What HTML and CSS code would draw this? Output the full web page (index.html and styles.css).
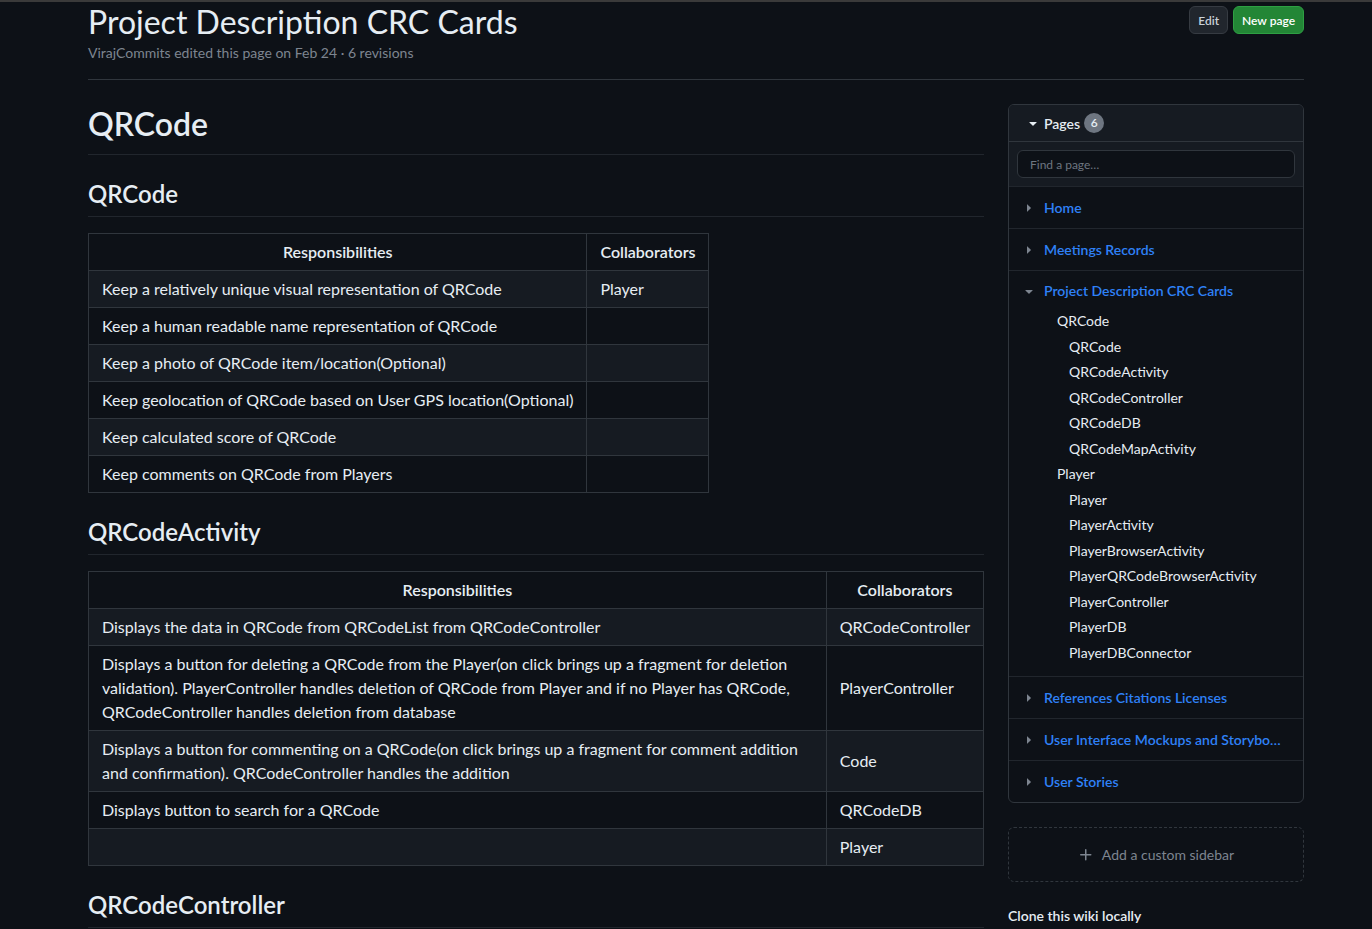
FILE: index.html
```html
<!DOCTYPE html>
<html lang="en">
<head>
<meta charset="utf-8">
<title>Project Description CRC Cards</title>
<link rel="stylesheet" href="styles.css">
</head>
<body>
<div class="topbar"></div>
<div class="container">
  <header class="page-head">
    <div class="head-text">
      <h1 class="page-title">Project Description CRC Cards</h1>
      <div class="page-meta">VirajCommits edited this page on Feb 24 · 6 revisions</div>
    </div>
    <div class="head-actions">
      <button class="btn">Edit</button>
      <button class="btn btn-primary">New page</button>
    </div>
  </header>

  <div class="layout">
    <main class="markdown">
      <h1>QRCode</h1>
      <h2>QRCode</h2>
      <table>
        <thead><tr><th>Responsibilities</th><th>Collaborators</th></tr></thead>
        <tbody>
          <tr><td>Keep a relatively unique visual representation of QRCode</td><td>Player</td></tr>
          <tr><td>Keep a human readable name representation of QRCode</td><td></td></tr>
          <tr><td>Keep a photo of QRCode item/location(Optional)</td><td></td></tr>
          <tr><td>Keep geolocation of QRCode based on User GPS location(Optional)</td><td></td></tr>
          <tr><td>Keep calculated score of QRCode</td><td></td></tr>
          <tr><td>Keep comments on QRCode from Players</td><td></td></tr>
        </tbody>
      </table>
      <h2>QRCodeActivity</h2>
      <table class="wide">
        <thead><tr><th>Responsibilities</th><th>Collaborators</th></tr></thead>
        <tbody>
          <tr><td>Displays the data in QRCode from QRCodeList from QRCodeController</td><td>QRCodeController</td></tr>
          <tr><td>Displays a button for deleting a QRCode from the Player(on click brings up a fragment for deletion validation). PlayerController handles deletion of QRCode from Player and if no Player has QRCode, QRCodeController handles deletion from database</td><td>PlayerController</td></tr>
          <tr><td>Displays a button for commenting on a QRCode(on click brings up a fragment for comment addition and confirmation). QRCodeController handles the addition</td><td>Code</td></tr>
          <tr><td>Displays button to search for a QRCode</td><td>QRCodeDB</td></tr>
          <tr><td></td><td>Player</td></tr>
        </tbody>
      </table>
      <h2>QRCodeController</h2>
    </main>

    <aside class="sidebar">
      <div class="pages-box">
        <div class="pages-head">
          <svg class="tri" viewBox="0 0 16 16" width="16" height="16"><path d="m4.427 7.427 3.396 3.396a.25.25 0 0 0 .354 0l3.396-3.396A.25.25 0 0 0 11.396 7H4.604a.25.25 0 0 0-.177.427Z"/></svg>
          <span class="pages-label">Pages</span>
          <span class="counter">6</span>
        </div>
        <div class="filter-row">
          <input class="filter" type="text" placeholder="Find a page…">
        </div>
        <ul class="page-list">
          <li class="page-item">
            <div class="item-row">
              <svg class="tri" viewBox="0 0 16 16" width="16" height="16"><path d="m6.427 4.427 3.396 3.396a.25.25 0 0 1 0 .354l-3.396 3.396A.25.25 0 0 1 6 11.396V4.604a.25.25 0 0 1 .427-.177Z"/></svg>
              <a href="#">Home</a>
            </div>
          </li>
          <li class="page-item">
            <div class="item-row">
              <svg class="tri" viewBox="0 0 16 16" width="16" height="16"><path d="m6.427 4.427 3.396 3.396a.25.25 0 0 1 0 .354l-3.396 3.396A.25.25 0 0 1 6 11.396V4.604a.25.25 0 0 1 .427-.177Z"/></svg>
              <a href="#">Meetings Records</a>
            </div>
          </li>
          <li class="page-item open">
            <div class="item-row">
              <svg class="tri" viewBox="0 0 16 16" width="16" height="16"><path d="m4.427 7.427 3.396 3.396a.25.25 0 0 0 .354 0l3.396-3.396A.25.25 0 0 0 11.396 7H4.604a.25.25 0 0 0-.177.427Z"/></svg>
              <a href="#">Project Description CRC Cards</a>
            </div>
            <ul class="toc">
              <li class="toc-1">QRCode</li>
              <li class="toc-2">QRCode</li>
              <li class="toc-2">QRCodeActivity</li>
              <li class="toc-2">QRCodeController</li>
              <li class="toc-2">QRCodeDB</li>
              <li class="toc-2">QRCodeMapActivity</li>
              <li class="toc-1">Player</li>
              <li class="toc-2">Player</li>
              <li class="toc-2">PlayerActivity</li>
              <li class="toc-2">PlayerBrowserActivity</li>
              <li class="toc-2">PlayerQRCodeBrowserActivity</li>
              <li class="toc-2">PlayerController</li>
              <li class="toc-2">PlayerDB</li>
              <li class="toc-2">PlayerDBConnector</li>
            </ul>
          </li>
          <li class="page-item">
            <div class="item-row">
              <svg class="tri" viewBox="0 0 16 16" width="16" height="16"><path d="m6.427 4.427 3.396 3.396a.25.25 0 0 1 0 .354l-3.396 3.396A.25.25 0 0 1 6 11.396V4.604a.25.25 0 0 1 .427-.177Z"/></svg>
              <a href="#">References Citations Licenses</a>
            </div>
          </li>
          <li class="page-item">
            <div class="item-row">
              <svg class="tri" viewBox="0 0 16 16" width="16" height="16"><path d="m6.427 4.427 3.396 3.396a.25.25 0 0 1 0 .354l-3.396 3.396A.25.25 0 0 1 6 11.396V4.604a.25.25 0 0 1 .427-.177Z"/></svg>
              <a href="#" class="trunc">User Interface Mockups and Storyboards</a>
            </div>
          </li>
          <li class="page-item">
            <div class="item-row">
              <svg class="tri" viewBox="0 0 16 16" width="16" height="16"><path d="m6.427 4.427 3.396 3.396a.25.25 0 0 1 0 .354l-3.396 3.396A.25.25 0 0 1 6 11.396V4.604a.25.25 0 0 1 .427-.177Z"/></svg>
              <a href="#">User Stories</a>
            </div>
          </li>
        </ul>
      </div>

      <div class="custom-sidebar">
        <svg class="plus" viewBox="0 0 16 16" width="16" height="16"><path d="M7.75 2a.75.75 0 0 1 .75.75V7h4.25a.75.75 0 0 1 0 1.5H8.5v4.25a.75.75 0 0 1-1.5 0V8.5H2.75a.75.75 0 0 1 0-1.5H7V2.75A.75.75 0 0 1 7.75 2Z"/></svg>
        <span>Add a custom sidebar</span>
      </div>

      <h5 class="clone">Clone this wiki locally</h5>
    </aside>
  </div>
</div>
</body>
</html>
```

FILE: styles.css
```css
* { box-sizing: border-box; }

html, body {
  margin: 0;
  background: #0d1117;
  color: #e6edf3;
  font-family: "Lato", "Liberation Sans", sans-serif;
  font-size: 14px;
  line-height: 1.5;
  overflow: hidden;
}

.topbar {
  height: 2px;
  background: #3a3a3a;
}

.container {
  width: 1216px;
  margin-left: 88px;
}

.page-head {
  display: flex;
  justify-content: space-between;
  align-items: flex-start;
  padding-bottom: 16px;
  border-bottom: 1px solid #30363d;
}

.page-title {
  margin: 0;
  font-size: 32px;
  font-weight: 400;
  line-height: 40px;
}

.page-meta {
  color: #7d8590;
  font-size: 14px;
  line-height: 21px;
}

.head-actions {
  display: flex;
  gap: 5px;
  margin-top: 4px;
}

.btn {
  height: 28px;
  padding: 0 8px;
  font-family: inherit;
  font-size: 12px;
  font-weight: 600;
  color: #c9d1d9;
  background: #21262d;
  border: 1px solid #363b42;
  border-radius: 6px;
}

.btn-primary {
  color: #ffffff;
  background: #238636;
  border-color: #2ea043;
}

.layout {
  display: flex;
  gap: 24px;
  margin-top: 24px;
}

.markdown {
  width: 896px;
  flex: none;
  font-size: 16px;
  line-height: 1.5;
}

.markdown h1,
.markdown h2 {
  margin: 24px 0 16px;
  font-weight: 600;
  line-height: 1.25;
  padding-bottom: 0.3em;
  border-bottom: 1px solid #21262d;
}

.markdown h1 {
  margin-top: 0;
  font-size: 32px;
}

.markdown h2 {
  font-size: 24px;
}

.markdown table {
  border-collapse: collapse;
  border-spacing: 0;
  margin: 0 0 16px;
}

.markdown table.wide {
  width: 100%;
}

.markdown th,
.markdown td {
  padding: 6px 13px;
  border: 1px solid #30363d;
  line-height: 24px;
}

.markdown th {
  font-weight: 600;
  text-align: center;
}

.markdown tbody tr:nth-child(odd) {
  background: #161b22;
}

.markdown tbody tr:nth-child(even) {
  background: #0d1117;
}

.markdown thead tr {
  background: #0d1117;
}

.sidebar {
  width: 296px;
  flex: none;
}

.pages-box {
  border: 1px solid #30363d;
  border-radius: 6px;
  overflow: hidden;
}

.pages-head {
  display: flex;
  align-items: center;
  height: 37px;
  padding: 0 16px;
  background: #161b22;
  border-bottom: 1px solid #30363d;
  font-weight: 600;
}

.tri {
  fill: #7d8590;
  flex: none;
}

.pages-head .tri {
  fill: #e6edf3;
  margin-left: 0;
  margin-right: 3px;
}

.pages-label {
  margin-right: 4px;
}

.counter {
  display: inline-flex;
  align-items: center;
  justify-content: center;
  min-width: 20px;
  height: 20px;
  padding: 0 6px;
  border-radius: 10px;
  background: #6e7681;
  color: #e6edf3;
  font-size: 12px;
  font-weight: 600;
}

.filter-row {
  padding: 8px;
  background: #161b22;
  border-bottom: 1px solid #21262d;
}

.filter {
  display: block;
  width: 100%;
  height: 28px;
  padding: 0 12px;
  font-family: inherit;
  font-size: 12px;
  color: #e6edf3;
  background: #0d1117;
  border: 1px solid #30363d;
  border-radius: 6px;
}

.filter::placeholder {
  color: #6e7681;
}

.page-list {
  list-style: none;
  margin: 0;
  padding: 0;
}

.page-item + .page-item {
  border-top: 1px solid #21262d;
}

.item-row {
  display: flex;
  align-items: center;
  height: 41px;
  padding: 0 16px 0 12px;
  gap: 7px;
}

.item-row a {
  color: #2f81f7;
  font-weight: 600;
  text-decoration: none;
  white-space: nowrap;
  overflow: hidden;
  text-overflow: ellipsis;
}

.open .item-row {
  height: 37px;
  padding-top: 2px;
}

.toc {
  list-style: none;
  margin: 0;
  padding: 0 16px 11px 48px;
}

.toc li {
  line-height: 25.5px;
  color: #e6edf3;
}

.toc .toc-2 {
  padding-left: 12px;
}

.custom-sidebar {
  display: flex;
  align-items: center;
  justify-content: center;
  gap: 8px;
  height: 55px;
  margin-top: 24px;
  border: 1px dashed #30363d;
  border-radius: 6px;
  color: #7d8590;
}

.plus {
  fill: #7d8590;
}

.clone {
  margin: 23px 0 0;
  font-size: 14px;
  font-weight: 600;
}
```
